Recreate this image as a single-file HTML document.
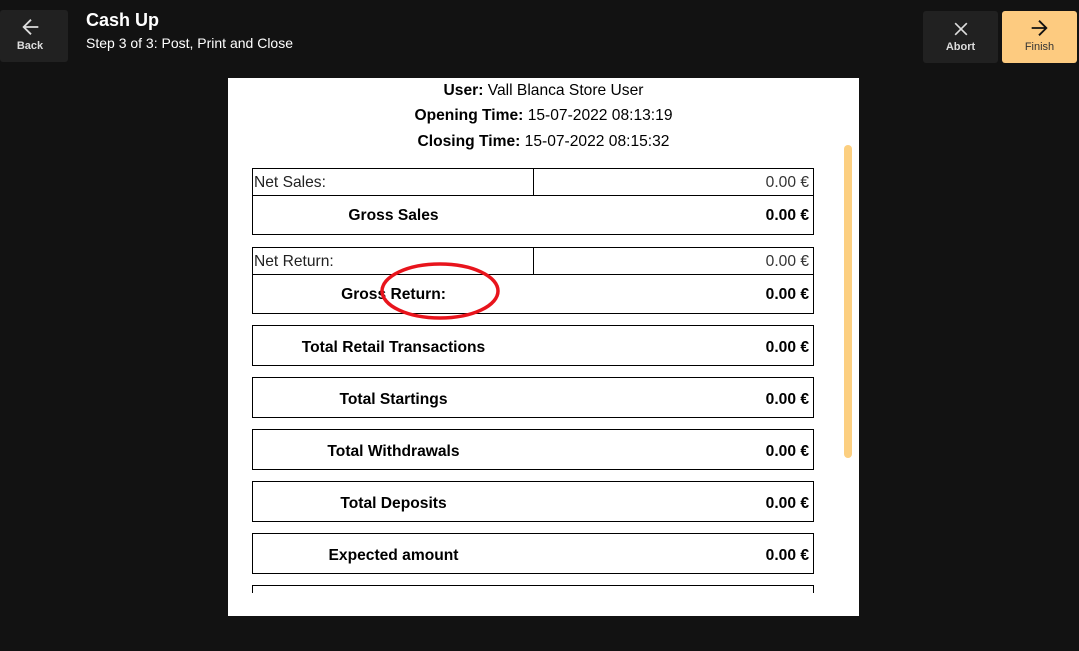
<!DOCTYPE html>
<html><head><style>
*{margin:0;padding:0;box-sizing:border-box}
body{width:1079px;height:651px;background:#121212;font-family:"Liberation Sans",sans-serif;position:relative;overflow:hidden;color:#000}
.a{position:absolute}
.btn{position:absolute;border-radius:3px;background:#212121;color:#ddd;font-size:11px;font-weight:bold;text-align:center}
.panel{left:228px;top:78px;width:631px;height:538px;background:#fff;overflow:hidden}
.box{position:absolute;left:24px;width:562px;border:1px solid #000}
.lab{position:absolute;width:281px;text-align:center;font-weight:bold;font-size:15.6px}
.val{position:absolute;right:4px;font-weight:bold;font-size:15.6px}
.hdr{position:absolute;left:0;width:100%;text-align:center;font-size:15.6px}
</style></head><body>
<div class="btn" style="left:0;top:10px;width:68px;height:52px">
<svg class="a" style="left:20px;top:6px" width="22" height="22" viewBox="0 0 24 24"><path d="M20 12H5M12 4l-8 8 8 8" stroke="#ddd" stroke-width="2" fill="none"/></svg>
<div class="a" style="left:0;width:60px;top:30px">Back</div></div>
<div class="a" style="left:86px;top:10px;color:#fff;font-size:18px;font-weight:bold">Cash Up</div>
<div class="a" style="left:86px;top:35px;color:#fff;font-size:14px">Step 3 of 3: Post, Print and Close</div>
<div class="btn" style="left:923px;top:11px;width:75px;height:52px">
<svg class="a" style="left:28px;top:8px" width="20" height="20" viewBox="0 0 24 24"><path d="M5 5l14 14M19 5L5 19" stroke="#ddd" stroke-width="2"/></svg>
<div class="a" style="left:0;width:75px;top:30px">Abort</div></div>
<div class="btn" style="left:1002px;top:11px;width:75px;height:52px;background:#fdcb80;color:#333">
<svg class="a" style="left:26px;top:6px" width="22" height="22" viewBox="0 0 24 24"><path d="M4 12h15M12 4l8 8-8 8" stroke="#111" stroke-width="2" fill="none"/></svg>
<div class="a" style="left:0;width:75px;top:30px;font-weight:normal">Finish</div></div>

<div class="a panel">
<div class="hdr" style="top:4px"><b>User:</b> Vall Blanca Store User</div>
<div class="hdr" style="top:29px"><b>Opening Time:</b> 15-07-2022 08:13:19</div>
<div class="hdr" style="top:55px"><b>Closing Time:</b> 15-07-2022 08:15:32</div>

<div class="box" style="top:90px;height:67px">
<div class="a" style="left:0;right:0;top:26px;border-top:1px solid #000"></div>
<div class="a" style="left:280px;top:0;height:27px;border-left:1px solid #000"></div>
<div class="a" style="left:1px;top:5px;font-size:15.6px;color:#222">Net Sales:</div>
<div class="a" style="right:4px;top:5px;font-size:15.6px;color:#333">0.00 €</div>
<div class="lab" style="top:38px">Gross Sales</div>
<div class="val" style="top:38px">0.00 €</div></div>

<div class="box" style="top:169px;height:67px">
<div class="a" style="left:0;right:0;top:26px;border-top:1px solid #000"></div>
<div class="a" style="left:280px;top:0;height:27px;border-left:1px solid #000"></div>
<div class="a" style="left:1px;top:5px;font-size:15.6px;color:#222">Net Return:</div>
<div class="a" style="right:4px;top:5px;font-size:15.6px;color:#333">0.00 €</div>
<div class="lab" style="top:38px">Gross Return:</div>
<div class="val" style="top:38px">0.00 €</div></div>

<div class="box" style="top:247px;height:41px"><div class="lab" style="top:13px">Total Retail Transactions</div><div class="val" style="top:13px">0.00 €</div></div>
<div class="box" style="top:299px;height:41px"><div class="lab" style="top:13px">Total Startings</div><div class="val" style="top:13px">0.00 €</div></div>
<div class="box" style="top:351px;height:41px"><div class="lab" style="top:13px">Total Withdrawals</div><div class="val" style="top:13px">0.00 €</div></div>
<div class="box" style="top:403px;height:41px"><div class="lab" style="top:13px">Total Deposits</div><div class="val" style="top:13px">0.00 €</div></div>
<div class="box" style="top:455px;height:41px"><div class="lab" style="top:13px">Expected amount</div><div class="val" style="top:13px">0.00 €</div></div>
<div class="box" style="top:507px;height:41px;border-bottom:none"></div>
<div class="a" style="left:0;top:515px;width:631px;height:30px;background:#fff"></div>

<div class="a" style="left:616px;top:67px;width:8px;height:313px;background:#fccf80;border-radius:4px"></div>
<svg class="a" style="left:150px;top:182px" width="126" height="62"><ellipse cx="62" cy="31" rx="58" ry="27" stroke="#e8141c" stroke-width="3.5" fill="none"/></svg>
</div>
</body></html>
